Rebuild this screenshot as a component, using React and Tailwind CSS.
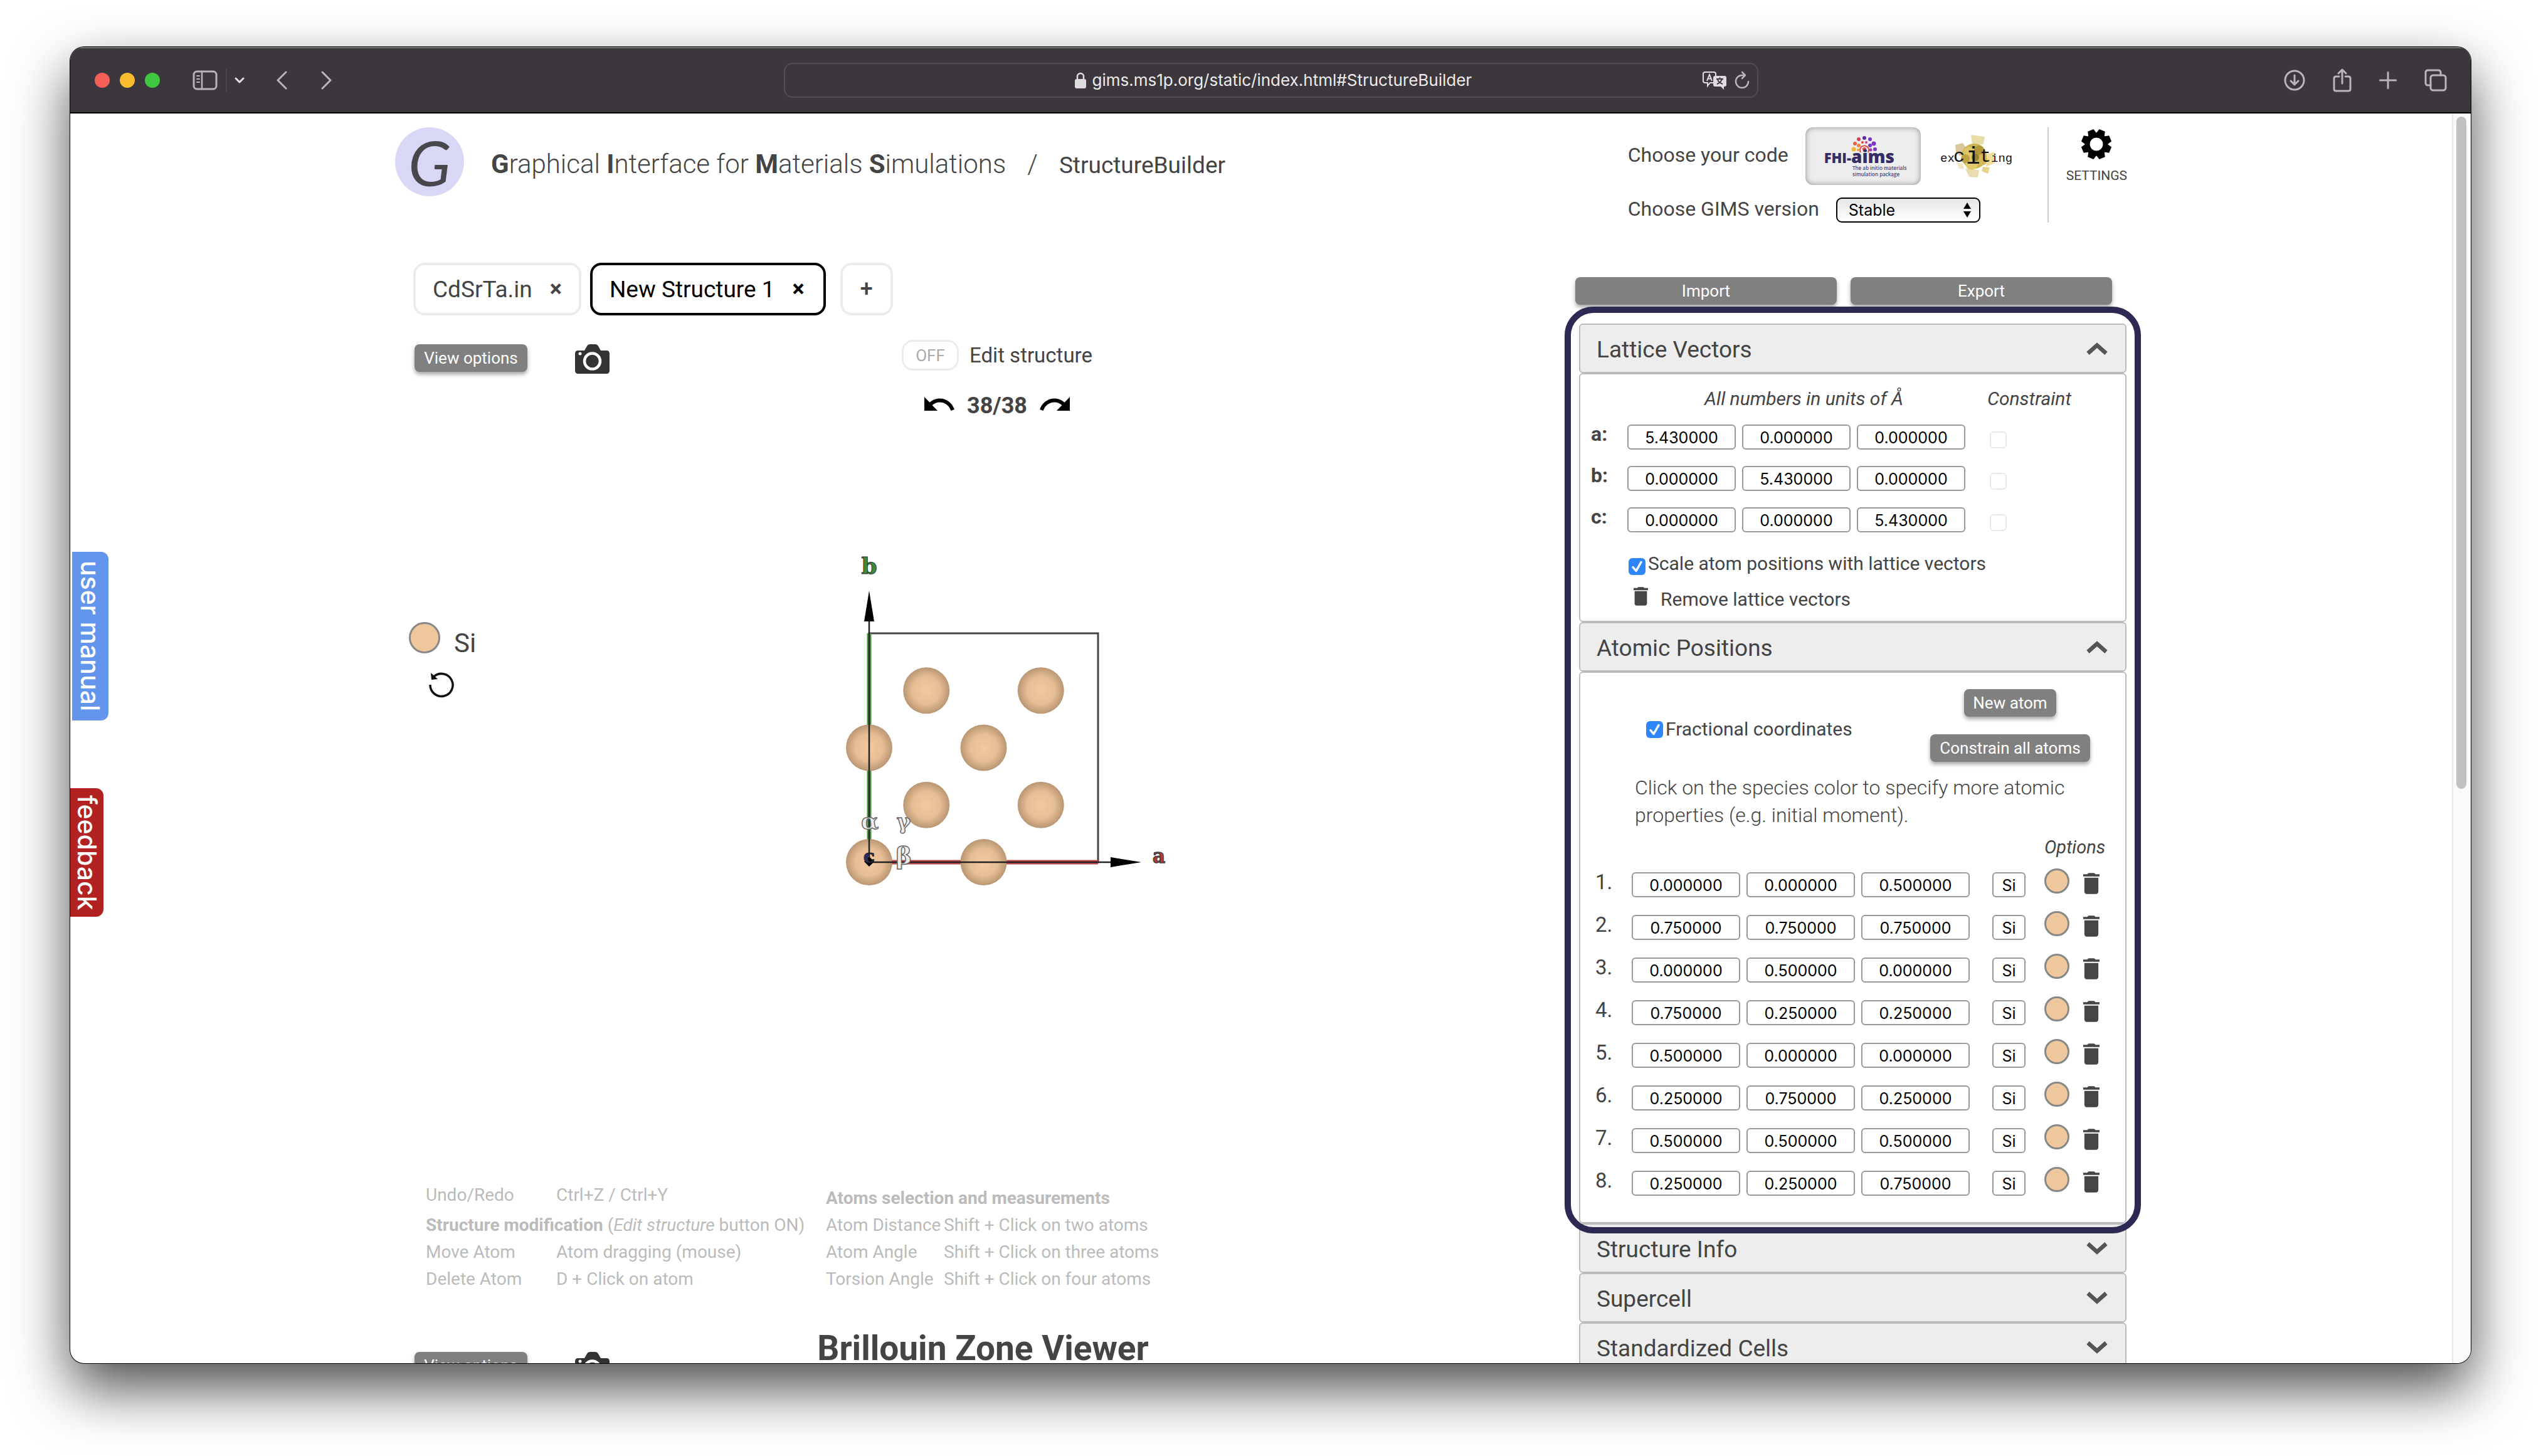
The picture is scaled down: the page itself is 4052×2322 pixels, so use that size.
import React from "react";

const LATTICE = [
  ["a", "5.430000", "0.000000", "0.000000"],
  ["b", "0.000000", "5.430000", "0.000000"],
  ["c", "0.000000", "0.000000", "5.430000"],
];

const ATOMS = [
  ["0.000000", "0.000000", "0.500000"],
  ["0.750000", "0.750000", "0.750000"],
  ["0.000000", "0.500000", "0.000000"],
  ["0.750000", "0.250000", "0.250000"],
  ["0.500000", "0.000000", "0.000000"],
  ["0.250000", "0.750000", "0.250000"],
  ["0.500000", "0.500000", "0.500000"],
  ["0.250000", "0.250000", "0.750000"],
];

/* ---------- icons ---------- */

function TrashIcon({ className }) {
  return (
    <svg viewBox="5 3 14 18" className={className} fill="#454545" aria-hidden="true">
      <path d="M6 19c0 1.1.9 2 2 2h8c1.1 0 2-.9 2-2V7H6v12zM19 4h-3.5l-1-1h-5l-1 1H5v2h14V4z" />
    </svg>
  );
}

function CameraIcon() {
  return (
    <svg viewBox="0 0 55 47" className="h-[47px] w-[55px]" aria-hidden="true">
      <path d="M5 10h10l4-7q1.500-3 5-3h8q3.500 0 5 3l4 7h9q5 0 5 5v27q0 5-5 5H5q-5 0-5-5V15q0-5 5-5z" fill="#333" />
      <circle cx="27.500" cy="27" r="12.500" fill="none" stroke="#fff" strokeWidth="4.500" />
      <circle cx="8" cy="15" r="2.500" fill="#fff" />
    </svg>
  );
}

function UndoIcon({ flip }) {
  return (
    <svg viewBox="2 7 20.5 9" preserveAspectRatio="none" className={flip ? "h-[22px] w-[48px] -scale-x-100" : "h-[22px] w-[48px]"} aria-hidden="true">
      <path d="M12.500 8c-2.650 0-5.050.990-6.900 2.600L2 7v9h9l-3.620-3.620c1.390-1.160 3.160-1.880 5.120-1.880 3.540 0 6.550 2.310 7.600 5.500l2.370-.780C21.080 11.030 17.150 8 12.500 8z" />
    </svg>
  );
}

function Chevron({ up }) {
  return (
    <svg viewBox="0 0 34 20" className="h-[20px] w-[34px]" fill="none" stroke="#555" strokeWidth="6.500" aria-hidden="true">
      <path d={up ? "M2.500 17.500 17 4.500l14.500 13" : "M2.500 2.500 17 15.500l14.500-13"} />
    </svg>
  );
}

function GearIcon() {
  return (
    <svg viewBox="-25 -25 50 50" className="h-[50px] w-[50px]" aria-hidden="true">
      <circle r="18.500" />
      {[0, 45, 90, 135, 180, 225, 270, 315].map((a) => (
        <path key={a} d="M-7-16l2-8h10l2 8z" transform={`rotate(${a + 22.5})`} />
      ))}
      <circle r="10.500" fill="#fff" />
    </svg>
  );
}

function FhiLogo() {
  return (
    <svg viewBox="0 0 184 92" className="h-full w-full" aria-hidden="true">
      <g fill="#e0483f">
        <circle cx="79" cy="26" r="3" fill="#e8604c" /><circle cx="85" cy="19" r="3" fill="#cf4351" />
        <circle cx="94" cy="17" r="3" fill="#5a2ea6" /><circle cx="103" cy="19" r="3" fill="#7a36c9" />
        <circle cx="109" cy="26" r="3.500" fill="#7a36c9" /><circle cx="111" cy="35" r="3" fill="#7a36c9" />
        <circle cx="77" cy="35" r="3.500" fill="#f6b52c" /><circle cx="85" cy="29" r="3" fill="#f08548" />
        <circle cx="91" cy="24" r="2" /><circle cx="97" cy="24" r="2" fill="#c7418b" />
        <circle cx="103" cy="29" r="3" fill="#7a36c9" /><circle cx="84" cy="36" r="2" fill="#f6a02c" />
        <circle cx="104" cy="36" r="2.500" fill="#9a3bb5" /><circle cx="94" cy="35" r="3" />
      </g>
      <path d="M88 40a7 7 0 1 1 12 0" fill="none" stroke="#e0483f" strokeWidth="2" />
      <text x="73" y="57" textAnchor="end" fontFamily="Open Sans, sans-serif" fontWeight="800" fontSize="22" fill="#352c63">FHI-</text>
      <text x="73" y="57" fontFamily="Open Sans, sans-serif" fontWeight="800" fontSize="28" fill="#352c63">aims</text>
      <text x="75" y="68" fontFamily="Open Sans, sans-serif" fontWeight="600" fontSize="8" fill="#4b4380">The ab initio materials</text>
      <text x="75" y="78" fontFamily="Open Sans, sans-serif" fontWeight="600" fontSize="8" fill="#4b4380">simulation package</text>
    </svg>
  );
}

function ExcitingLogo() {
  return (
    <svg viewBox="0 0 116 72" className="h-[72px] w-[116px]" aria-hidden="true">
      <path d="M49 2l22 3-2 12-18 2z" fill="#e9dca6" />
      <path d="M24 18l12-3 6 9-10 12-7-6z" fill="#d9c79a" />
      <path d="M74 33l12-4 1 18-14 6z" fill="#efdf9b" />
      <path d="M68 53l11 1-3 10-10-4z" fill="#e5d389" />
      <path d="M40 56l22 2-2 12-14-1z" fill="#eadcae" />
      <path d="M26 46l10 2 2 9-8-1z" fill="#f1e7c6" />
      <circle cx="54" cy="36" r="20" fill="#cdb251" />
      <circle cx="46" cy="30" r="9" fill="#dcc668" /><circle cx="62" cy="27" r="8" fill="#b3973a" />
      <circle cx="66" cy="42" r="9" fill="#d3b95a" /><circle cx="50" cy="48" r="10" fill="#e0ca6c" />
      <circle cx="40" cy="40" r="7" fill="#bfa245" /><circle cx="56" cy="38" r="6" fill="#9c8130" />
      <g fontFamily="Liberation Mono, monospace" fill="#111">
        <text x="0" y="45" fontSize="19">ex</text>
        <text x="21" y="45" fontSize="30">c</text>
        <text x="41" y="48" fontSize="38">i</text>
        <text x="63" y="45" fontSize="30">t</text>
        <text x="81" y="45" fontSize="19">ing</text>
      </g>
    </svg>
  );
}

/* ---------- browser toolbar ---------- */

function Toolbar() {
  const stroke = { fill: "none", stroke: "#b9b5bb", strokeWidth: 3, strokeLinecap: "round", strokeLinejoin: "round" };
  return (
    <header className="grid h-[106px] shrink-0 grid-cols-[1fr_1554px_1fr] items-center border-t-2 border-b-2 border-t-[#777577] border-b-black bg-[#3c373c] pr-[38px] pl-[39px]">
      <div className="flex items-center">
        <div className="flex gap-[16px]">
          <button aria-label="Close window" className="size-[24px] rounded-full bg-[#f55f56]" />
          <button aria-label="Minimise window" className="size-[24px] rounded-full bg-[#f9bc2e]" />
          <button aria-label="Zoom window" className="size-[24px] rounded-full bg-[#3ec73f]" />
        </div>
        <button aria-label="Sidebar" className="ml-[52px]">
          <svg viewBox="0 0 40 32" className="h-[32px] w-[40px]" {...stroke}>
            <rect x="2" y="2" width="36" height="28" rx="5" />
            <path d="M15 2v28" strokeWidth="2.500" />
            <path d="M7 9h4M7 14h4M7 19h4" strokeWidth="2" />
          </svg>
        </button>
        <div className="ml-[13px] h-[36px] w-[2px] bg-[#4a464a]" />
        <button aria-label="Sidebar menu" className="ml-[12px]">
          <svg viewBox="0 0 16 10" className="h-[10px] w-[16px]" {...stroke} stroke="#e2e0e3"><path d="M2 2l6 6 6-6" /></svg>
        </button>
        <button aria-label="Back" className="ml-[50px]">
          <svg viewBox="0 0 18 30" className="h-[30px] w-[18px]" {...stroke}><path d="M16 2L3 15l13 13" /></svg>
        </button>
        <button aria-label="Forward" className="ml-[54px]">
          <svg viewBox="0 0 18 30" className="h-[30px] w-[18px]" {...stroke}><path d="M2 2l13 13L2 28" /></svg>
        </button>
      </div>

      <div className="grid h-[56px] grid-cols-[1fr_auto_1fr] items-center rounded-[14px] border-2 border-[#504c50]">
        <span />
        <div className="flex items-center gap-[10px] pl-[8px]">
          <svg viewBox="0 0 18 26" className="h-[26px] w-[18px]" aria-hidden="true">
            <rect y="11" width="18" height="15" rx="3" fill="#dedcdf" />
            <path d="M4 12V7a5 5 0 0 1 10 0v5" fill="none" stroke="#dedcdf" strokeWidth="2.500" />
          </svg>
          <input
            aria-label="Address"
            defaultValue="gims.ms1p.org/static/index.html#StructureBuilder"
            className="w-[606px] bg-transparent font-[Inter,sans-serif] text-[26px] leading-[36px] text-[#eceaed] outline-none"
          />
        </div>
        <div className="flex items-center justify-end gap-[12px] pr-[12px]">
          <button aria-label="Translate">
            <svg viewBox="0 0 40 30" className="h-[30px] w-[40px]" aria-hidden="true">
              <path d="M5 2h14q3 0 3 3v14h-9l-4 5v-5H5q-3 0-3-3V5q0-3 3-3z" fill="none" stroke="#dedcdf" strokeWidth="2" />
              <path d="M8 16l4-10 4 10M9.500 12.500h5" fill="none" stroke="#dedcdf" strokeWidth="2" />
              <path d="M21 8h15q3 0 3 3v11q0 3-3 3h-1v5l-5-5h-9q-3 0-3-3V11q0-3 3-3z" fill="#dedcdf" />
              <path d="M23 13h11M28.500 10.500V13M32 13q-2 6-8 8M25 14q2 5 8 7" fill="none" stroke="#3c373c" strokeWidth="2" />
            </svg>
          </button>
          <button aria-label="Reload">
            <svg viewBox="0 0 24 30" className="h-[30px] w-[24px]" {...stroke} strokeWidth="2.500">
              <path d="M12 7a10 10 0 1 0 10 10M12 7l5 0M12 2l5 5-5 5" />
            </svg>
          </button>
        </div>
      </div>

      <div className="flex items-center justify-end gap-[44px]">
        <button aria-label="Downloads">
          <svg viewBox="0 0 34 34" className="size-[34px]" {...stroke}>
            <circle cx="17" cy="17" r="15" /><path d="M17 9v15M11 18l6 6 6-6" />
          </svg>
        </button>
        <button aria-label="Share">
          <svg viewBox="0 0 30 38" className="h-[38px] w-[30px]" {...stroke}>
            <path d="M10 13H5q-3 0-3 3v17q0 3 3 3h20q3 0 3-3V16q0-3-3-3h-5M15 24V2M9 8l6-6 6 6" />
          </svg>
        </button>
        <button aria-label="New tab">
          <svg viewBox="0 0 28 28" className="size-[28px]" {...stroke}><path d="M14 1.500v25M1.500 14h25" /></svg>
        </button>
        <button aria-label="Tab overview">
          <svg viewBox="0 0 36 36" className="size-[36px]" {...stroke}>
            <rect x="10" y="10" width="24" height="24" rx="4" />
            <path d="M10 26H6q-4 0-4-4V6q0-4 4-4h16q4 0 4 4v4" />
          </svg>
        </button>
      </div>
    </header>
  );
}

/* ---------- shared pieces ---------- */

function GrayButton({ children, className = "" }) {
  return (
    <button className={`h-[44px] rounded-[8px] bg-[#808080] text-[26px] leading-[36px] text-white shadow-[0_4px_6px_rgba(0,0,0,0.35)] ${className}`}>
      {children}
    </button>
  );
}

function NumberBox({ value, label, className = "w-[173px]" }) {
  return (
    <input
      type="text"
      aria-label={label}
      defaultValue={value}
      className={`block h-[40px] rounded-[6px] border-2 border-[#999] bg-white pt-[2px] text-center font-[Inter,sans-serif] text-[25px] leading-[34px] text-black ${className}`}
    />
  );
}

function CheckBox({ id, className = "" }) {
  return (
    <span className={`relative size-[27px] ${className}`}>
      <input id={id} type="checkbox" defaultChecked className="peer block size-[27px] appearance-none rounded-[6px] bg-white checked:bg-[#2f86fb]" />
      <svg viewBox="0 0 27 27" className="pointer-events-none absolute inset-0 hidden peer-checked:block" fill="none" stroke="#fff" strokeWidth="3.500" strokeLinecap="round" strokeLinejoin="round" aria-hidden="true">
        <path d="M7 14.500l5 6 8-14" />
      </svg>
    </span>
  );
}

function PanelHeader({ title, open }) {
  return (
    <button aria-expanded={open} className="flex h-[79px] w-full items-center justify-between rounded-[6px] border-2 border-[#bbb] bg-[#ededed] pr-[28px] pl-[26px]">
      <span className="pt-[4px] text-[37px] leading-[44px]">{title}</span>
      <Chevron up={open} />
    </button>
  );
}

/* ---------- page header ---------- */

function PageHeader() {
  return (
    <div className="flex items-start justify-between">
      <div className="flex items-center">
        <div className="flex size-[110px] items-center justify-center rounded-full bg-[#d8d8f6] font-[Lato,sans-serif] text-[100px] leading-[110px] text-[#48484c] italic">
          G
        </div>
        <h1 className="ml-[43px] flex items-baseline pt-[10px] text-[42px] leading-[56px] font-light">
          <span>
            <b className="font-bold">G</b>raphical <b className="font-bold">I</b>nterface for <b className="font-bold">M</b>aterials <b className="font-bold">S</b>imulations
          </span>
          <span className="ml-[34px]">/</span>
          <span className="ml-[34px] text-[37px] font-normal">StructureBuilder</span>
        </h1>
      </div>

      <div className="flex">
        <div>
          <div className="flex items-center text-[32px] leading-[40px]">
            <span className="pb-[5px]">Choose your code</span>
            <button aria-label="FHI-aims" className="ml-[27px] h-[92px] w-[184px] rounded-[12px] bg-[#ededed] shadow-[inset_0_0_10px_rgba(0,0,0,0.4)]">
              <FhiLogo />
            </button>
            <button aria-label="exciting" className="ml-[31px]">
              <ExcitingLogo />
            </button>
          </div>
          <div className="mt-[20px] flex items-center">
            <label htmlFor="version" className="pb-[4px] text-[32px] leading-[36px]">Choose GIMS version</label>
            <span className="relative ml-[27px]">
              <select id="version" className="block h-[40px] w-[230px] appearance-none rounded-[9px] border-2 border-black bg-linear-to-b from-[#e6e6e6] to-white pl-[18px] font-[Inter,sans-serif] text-[25px] leading-[34px] text-black">
                <option>Stable</option>
              </select>
              <svg viewBox="0 0 12 24" className="pointer-events-none absolute top-[8px] right-[15px] h-[24px] w-[12px]" aria-hidden="true">
                <path d="M6 0l6 10H0zM6 24l6-10H0z" />
              </svg>
            </span>
          </div>
        </div>
        <div className="ml-[55px] h-[152px] border-l-2 border-[#ccc] pl-[28px]">
          <button className="flex flex-col items-center pt-[2px] text-[21px] leading-[28px]">
            <GearIcon />
            <span className="mt-[11px]">SETTINGS</span>
          </button>
        </div>
      </div>
    </div>
  );
}

/* ---------- structure viewer ---------- */

function StructureView() {
  const x0 = 1386, y0 = 1375, s = 365;
  const atoms = [[0.25, 0.75], [0.75, 0.75], [0, 0.5], [0.5, 0.5], [0.25, 0.25], [0.75, 0.25], [0, 0], [0.5, 0]];
  return (
    <svg viewBox="1258 872 620 560" className="h-[560px] w-[620px]" role="img" aria-label="Crystal structure">
      <defs>
        <radialGradient id="si">
          <stop offset="0" stopColor="#f3ca9f" />
          <stop offset="0.6" stopColor="#e6bd94" />
          <stop offset="1" stopColor="#b99673" />
        </radialGradient>
      </defs>
      <rect x={x0} y={y0 - s} width={s} height={s} fill="none" stroke="#444" strokeWidth="3" />
      <path d={`M${x0} ${y0}V${y0 - s}`} stroke="#4f9a45" strokeWidth="7" />
      <path d={`M${x0} ${y0}H${x0 + s}`} stroke="#c2474b" strokeWidth="7" />
      {atoms.map(([a, b]) => (
        <circle key={`${a}-${b}`} cx={x0 + a * s} cy={y0 - b * s} r="37" fill="url(#si)" />
      ))}
      <path d={`M${x0} ${y0}V985M${x0} ${y0}H1775`} stroke="#222" strokeWidth="2.500" />
      <path d="M1386 942l8 49h-16zM1820 1375l-49 8v-16z" />
      <path d="M1378 1374l8 8 8-8-8-8z" />
      <g fontFamily="DejaVu Serif, serif" fontWeight="700" textAnchor="middle">
        <text x="1386" y="915" fontSize="36" fill="#3f8a36" stroke="#333" strokeWidth="1">b</text>
        <text x="1848" y="1376" fontSize="31" fill="#c03437" stroke="#444" strokeWidth="1.500">a</text>
        <text x="1386" y="1376" fontSize="30" fill="#2b2b66" stroke="#222" strokeWidth="1">c</text>
        <g fill="#eee" stroke="#666" strokeWidth="1.500">
          <text x="1387" y="1322" fontSize="36">α</text>
          <text x="1441" y="1322" fontSize="34">γ</text>
          <text x="1441" y="1378" fontSize="38">β</text>
        </g>
      </g>
    </svg>
  );
}

function Tab({ name, active }) {
  return (
    <div className={active
      ? "flex h-[84px] items-center rounded-[18px] border-4 border-black pr-[30px] pl-[27px] text-black"
      : "flex h-[84px] items-center rounded-[18px] border-4 border-[#ececee] pr-[27px] pl-[27px]"}>
      <button className="pt-[2px] text-[37px] leading-[44px]">{name}</button>
      <button aria-label={`Close ${name}`} className="ml-[28px] text-[36px] leading-[44px] font-bold">×</button>
    </div>
  );
}

function ViewerHead({ children, toolsClass }) {
  return (
    <div className="grid grid-cols-[1fr_auto_1fr]">
      <div className={`flex items-start pl-[2px] ${toolsClass}`}>
        <GrayButton className="w-[180px]">View options</GrayButton>
        <button aria-label="Take picture" className="ml-[76px]"><CameraIcon /></button>
      </div>
      {children}
      <span />
    </div>
  );
}

function Help() {
  return (
    <div className="flex pl-[20px] text-[28px] leading-[43px] text-[#bbb]">
      <div className="w-[638px]">
        <dl className="mb-[5px] grid grid-cols-[208px_1fr]">
          <dt>Undo/Redo</dt><dd>Ctrl+Z / Ctrl+Y</dd>
        </dl>
        <p className="whitespace-nowrap"><b>Structure modification</b> (<i>Edit structure</i> button ON)</p>
        <dl className="grid grid-cols-[208px_1fr]">
          <dt>Move Atom</dt><dd>Atom dragging (mouse)</dd>
          <dt>Delete Atom</dt><dd>D + Click on atom</dd>
        </dl>
      </div>
      <div className="pt-[5px]">
        <p><b>Atoms selection and measurements</b></p>
        <dl className="grid grid-cols-[188px_1fr] whitespace-nowrap">
          <dt>Atom Distance</dt><dd>Shift + Click on two atoms</dd>
          <dt>Atom Angle</dt><dd>Shift + Click on three atoms</dd>
          <dt>Torsion Angle</dt><dd>Shift + Click on four atoms</dd>
        </dl>
      </div>
    </div>
  );
}

function Viewer() {
  return (
    <section className="pl-[29px]">
      <div className="flex">
        <Tab name="CdSrTa.in" />
        <div className="ml-[14px]"><Tab name="New Structure 1" active /></div>
        <button aria-label="Add structure" className="ml-[23px] size-[84px] rounded-[18px] border-4 border-[#ececee] text-[36px] leading-[44px] font-medium">+</button>
      </div>

      <div className="mt-[39px]">
        <ViewerHead toolsClass="pt-[7px]">
          <div className="ml-[45px] flex flex-col items-center">
            <div className="flex items-center gap-[17px]">
              <button id="edit" aria-pressed="false" className="h-[49px] w-[91px] rounded-[18px] border-[3px] border-[#ececee] text-[26px] leading-[36px] text-[#aaa]">OFF</button>
              <label htmlFor="edit" className="text-[33px] leading-[44px]">Edit structure</label>
            </div>
            <div className="mt-[30px] flex items-center gap-[20px]">
              <button aria-label="Undo"><UndoIcon /></button>
              <span className="pt-[6px] text-[36px] leading-[40px] font-bold">38/38</span>
              <button aria-label="Redo"><UndoIcon flip /></button>
            </div>
          </div>
        </ViewerHead>
      </div>

      <div className="mt-[205px] grid grid-cols-[1fr_auto_1fr]">
        <div className="pt-[113px]">
          <div className="-ml-[7px] flex items-center gap-[22px]">
            <button aria-label="Si colour" className="size-[50px] rounded-full border-[3px] border-[#888] bg-[#efc79d]" />
            <span className="pt-[18px] text-[42px] leading-[46px]">Si</span>
          </div>
          <button aria-label="Reset view" className="mt-[22px] ml-[24px] block">
            <svg viewBox="0 0 42 42" className="size-[42px]" fill="none" stroke="#111" strokeWidth="3.500" aria-hidden="true">
              <path d="M3 21a18 18 0 1 0 6-13" />
              <path d="M4 2l1 11 10-1z" fill="#111" stroke="none" />
            </svg>
          </button>
        </div>
        <StructureView />
        <span />
      </div>

      <div className="mt-[452px]"><Help /></div>

      <div className="mt-[57px]">
        <ViewerHead toolsClass="pt-[38px]">
          <h2 className="text-[55px] leading-[64px] font-bold">Brillouin Zone Viewer</h2>
        </ViewerHead>
      </div>
    </section>
  );
}

/* ---------- side panel ---------- */

function LatticeVectors() {
  return (
    <div className="rounded-[6px] border-2 border-[#bbb] pt-[19px] pb-[14px] pl-[17px]">
      <table className="border-collapse">
        <thead>
          <tr className="h-[48px] align-top text-[30px] leading-[40px]">
            <td className="w-[58px] p-0" />
            <th colSpan={3} className="p-0 pl-[14px] text-center font-normal italic">All numbers in units of Å</th>
            <th className="p-0 pl-[25px] text-left font-normal italic">Constraint</th>
          </tr>
        </thead>
        <tbody>
          {LATTICE.map(([name, ...v]) => (
            <tr key={name} className="h-[66px]">
              <th className="p-0 pb-[10px] text-left text-[32px] leading-[40px] font-bold">{name}:</th>
              {v.map((n, i) => (
                <td key={i} className="w-[183px] p-0"><NumberBox value={n} label={`${name} ${i + 1}`} /></td>
              ))}
              <td className="p-0 pt-[8px] pl-[29px]">
                <input type="checkbox" aria-label={`Constrain ${name}`} className="block size-[27px] appearance-none rounded-[6px] border-2 border-[#e9e9e9] bg-white" />
              </td>
            </tr>
          ))}
        </tbody>
      </table>
      <div className="mt-[17px] flex items-center gap-[4px] pl-[60px] text-[30px] leading-[40px]">
        <CheckBox id="scale" className="mt-[9px]" />
        <label htmlFor="scale">Scale atom positions with lattice vectors</label>
      </div>
      <button className="mt-[17px] flex items-start gap-[20px] pl-[68px] text-[30px] leading-[40px]">
        <TrashIcon className="h-[30px] w-[23px]" />
        Remove lattice vectors
      </button>
    </div>
  );
}

function AtomicPositions() {
  return (
    <div className="rounded-[6px] border-2 border-[#bbb] pt-[26px] pb-[28px]">
      <div className="flex items-center justify-between pr-[56px] pl-[105px]">
        <div className="flex items-center gap-[4px] pt-[12px] text-[30px] leading-[40px]">
          <CheckBox id="frac" />
          <label htmlFor="frac">Fractional coordinates</label>
        </div>
        <div className="flex flex-col items-center gap-[28px]">
          <GrayButton className="w-[147px]">New atom</GrayButton>
          <GrayButton className="w-[255px]">Constrain all atoms</GrayButton>
        </div>
      </div>
      <p className="mt-[19px] pr-[50px] pl-[87px] text-[32px] leading-[44px] font-light">
        Click on the species color to specify more atomic properties (e.g. initial moment).
      </p>
      <table className="mt-[9px] ml-[24px] border-collapse">
        <thead>
          <tr className="h-[46px] align-top text-[29px] leading-[40px]">
            <td colSpan={5} className="p-0" />
            <th colSpan={2} className="p-0 pl-[30px] text-left font-normal italic">Options</th>
          </tr>
        </thead>
        <tbody>
          {ATOMS.map((v, r) => (
            <tr key={r} className="h-[68px]">
              <td className="w-[58px] p-0 pb-[8px] text-[33px] leading-[40px]">{r + 1}.</td>
              {v.map((n, i) => (
                <td key={i} className="w-[183px] p-0"><NumberBox value={n} label={`Atom ${r + 1} coordinate ${i + 1}`} /></td>
              ))}
              <td className="p-0 pl-[26px]"><NumberBox value="Si" label={`Atom ${r + 1} species`} className="w-[53px]" /></td>
              <td className="w-[70px] p-0 pb-[12px] pl-[30px]">
                <button aria-label={`Atom ${r + 1} options`} className="block size-[40px] rounded-full border-[3px] border-[#888] bg-[#efc79d]" />
              </td>
              <td className="p-0 pb-[4px] pl-[22px]">
                <button aria-label={`Delete atom ${r + 1}`} className="block"><TrashIcon className="h-[34px] w-[26px]" /></button>
              </td>
            </tr>
          ))}
        </tbody>
      </table>
    </div>
  );
}

function SidePanel() {
  return (
    <aside className="pt-[23px] pr-px">
      <div className="flex gap-[22px] pr-[23px]">
        <GrayButton className="flex-1">Import</GrayButton>
        <GrayButton className="flex-1">Export</GrayButton>
      </div>
      <div className="mt-[30px] ml-[6px]">
        <div className="relative">
          <PanelHeader title="Lattice Vectors" open />
          <LatticeVectors />
          <PanelHeader title="Atomic Positions" open />
          <AtomicPositions />
          <div className="pointer-events-none absolute -inset-x-[23px] -top-[27px] -bottom-[16px] z-10 rounded-[46px] border-[10px] border-[#2c2a52]" />
        </div>
        <PanelHeader title="Structure Info" open={false} />
        <PanelHeader title="Supercell" open={false} />
        <PanelHeader title="Standardized Cells" open={false} />
      </div>
    </aside>
  );
}

export default function App() {
  return (
    <div className="flex h-screen flex-col overflow-hidden bg-white px-[112px] pt-[75px] pb-[148px] font-[Roboto,sans-serif] text-[#444]">
      <div className="flex min-h-0 flex-1 flex-col overflow-hidden rounded-[22px] bg-white shadow-[0_0_0_1px_#000,0_40px_90px_rgba(0,0,0,0.7)]">
        <Toolbar />
        <div className="flex min-h-0 flex-1">
          <main className="relative flex-1 overflow-hidden">
            <a href="#manual" className="absolute top-[699px] left-[3px] flex h-[269px] w-[58px] items-center justify-center rounded-r-[12px] bg-[#6495ed] font-[Inter,sans-serif] text-[41px] leading-[50px] font-medium text-white [writing-mode:vertical-rl]">
              user manual
            </a>
            <a href="#feedback" className="absolute top-[1076px] left-0 flex h-[205px] w-[53px] items-center justify-center rounded-r-[12px] bg-[#b22222] font-[Inter,sans-serif] text-[41px] leading-[50px] font-medium text-white [writing-mode:vertical-rl]">
              feedback
            </a>
            <div className="mx-auto max-w-[2762px] pt-[22px]">
              <PageHeader />
              <div className="mt-[64px] grid grid-cols-[1fr_880px]">
                <div className="pr-[36px]"><Viewer /></div>
                <SidePanel />
              </div>
            </div>
          </main>
          <div className="w-[30px] border-l-2 border-[#e8e8e8] bg-[#fafafa] pt-[5px] pl-[5px]">
            <div className="h-[1072px] w-[16px] rounded-full bg-[#c1c1c1]" />
          </div>
        </div>
      </div>
    </div>
  );
}
